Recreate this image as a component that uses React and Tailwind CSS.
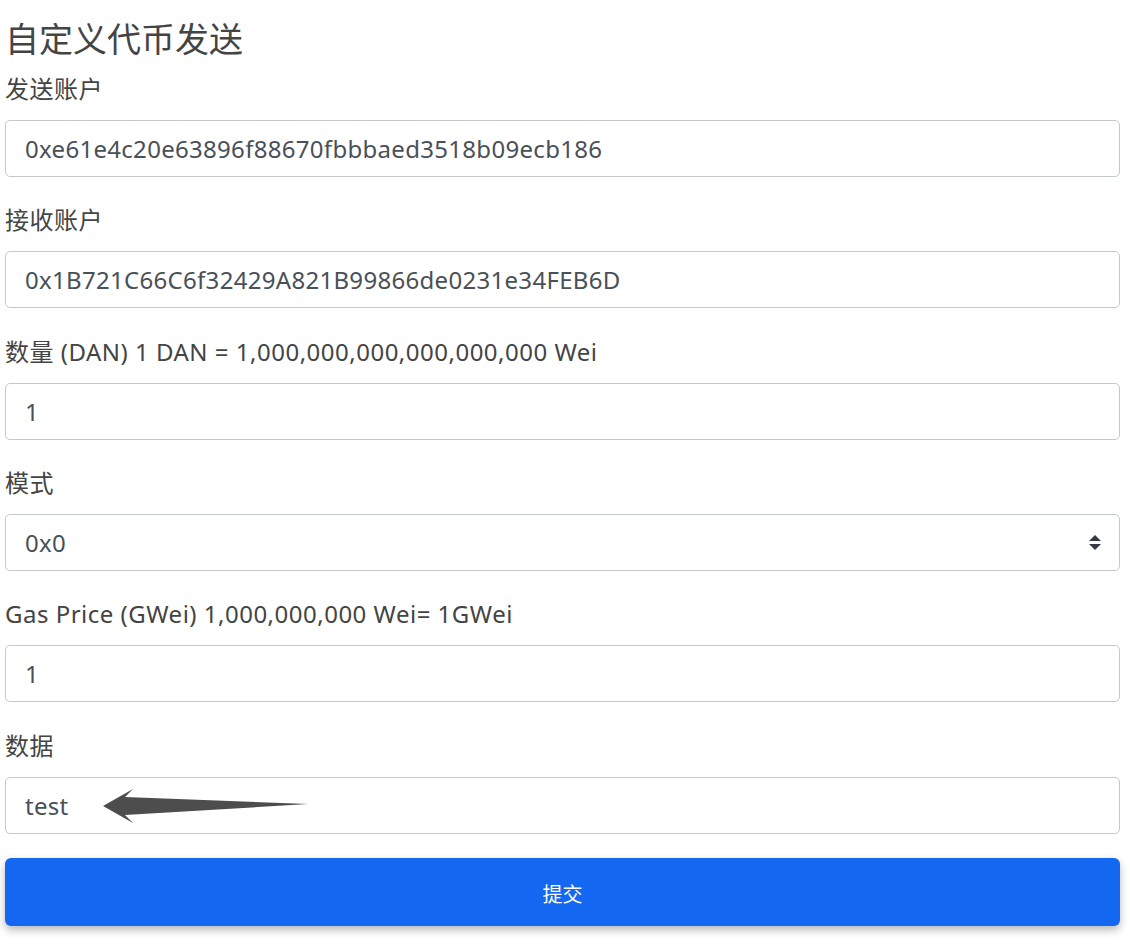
import React, { useState } from "react";

const FONT = { fontFamily: '"Noto Sans", "Noto Sans CJK SC", sans-serif' };

function Field({ label, gap = "mb-[25px]", children }) {
  return (
    <div className={gap}>
      <label className="block h-[36px] leading-[36px] text-[24px] text-[#444] mb-[13px] whitespace-nowrap tracking-[0.5px]">{label}</label>
      {children}
    </div>
  );
}

const inputCls =
  "block w-full h-[57px] rounded-[5px] border border-[#c6c9cc] bg-white pl-[19px] pr-4 text-[24px] text-[#495057] tracking-[0.3px] outline-none";

export default function App() {
  const [from, setFrom] = useState("0xe61e4c20e63896f88670fbbbaed3518b09ecb186");
  const [to, setTo] = useState("0x1B721C66C6f32429A821B99866de0231e34FEB6D");
  const [amount, setAmount] = useState("1");
  const [mode, setMode] = useState("0x0");
  const [gas, setGas] = useState("1");
  const [data, setData] = useState("test");

  return (
    <div className="min-h-[944px] bg-white pl-[5px] pr-[10px] pt-[17px]" style={FONT}>
      <h2 className="h-[44px] leading-[44px] text-[34px] text-[#444] mb-[10px]">自定义代币发送</h2>

      <Field label="发送账户">
        <input className={inputCls} value={from} onChange={e => setFrom(e.target.value)} />
      </Field>

      <Field label="接收账户" gap="mb-[26px]">
        <input className={inputCls} value={to} onChange={e => setTo(e.target.value)} />
      </Field>

      <Field label="数量 (DAN) 1 DAN = 1,000,000,000,000,000,000 Wei">
        <input className={inputCls} value={amount} onChange={e => setAmount(e.target.value)} />
      </Field>

      <Field label="模式">
        <div className="relative">
          <select
            className={`${inputCls} appearance-none`}
            value={mode}
            onChange={e => setMode(e.target.value)}
          >
            <option value="0x0">0x0</option>
            <option value="0x1">0x1</option>
          </select>
          <svg className="pointer-events-none absolute right-[19px] top-[21px]" width="12" height="15" viewBox="0 0 12 15">
            <path d="M6 0 L12 6 L0 6 Z" fill="#343a40" />
            <path d="M0 9 L12 9 L6 15 Z" fill="#343a40" />
          </svg>
        </div>
      </Field>

      <Field label="Gas Price (GWei) 1,000,000,000 Wei= 1GWei" gap="mb-[26px]">
        <input className={inputCls} value={gas} onChange={e => setGas(e.target.value)} />
      </Field>

      <Field label="数据" gap="mb-[24px]">
        <div className="relative">
          <input className={inputCls} value={data} onChange={e => setData(e.target.value)} />
          {/* annotation arrow */}
          <svg className="pointer-events-none absolute left-[93px] top-[10px]" width="210" height="38" viewBox="0 0 210 38">
            <path d="M5 19 L35 2 L27 10 L210 17 L27 28 L35 36 Z" fill="#4d4d4d" />
          </svg>
        </div>
      </Field>

      <button className="block w-full h-[68px] rounded-[6px] bg-[#1467f1] text-white text-[20px] leading-[68px] pt-[3px] shadow-[0_4px_8px_rgba(0,0,0,0.28)]">
        提交
      </button>
    </div>
  );
}
